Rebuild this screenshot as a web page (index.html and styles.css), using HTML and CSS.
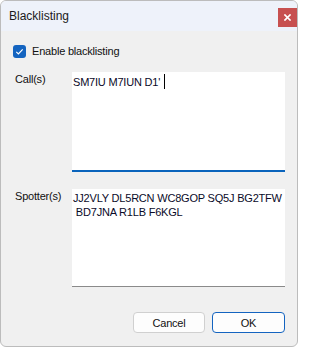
FILE: index.html
```html
<!DOCTYPE html>
<html>
<head>
<meta charset="utf-8">
<link rel="stylesheet" href="styles.css">
</head>
<body>
<div class="window">
  <div class="titlebar">
    <span class="title">Blacklisting</span>
    <span class="close">
      <svg width="7" height="7" viewBox="0 0 7 7"><path d="M1 1L6 6M6 1L1 6" stroke="#fff" stroke-width="1.7" stroke-linecap="square"/></svg>
    </span>
  </div>
  <div class="content">
    <label class="check-row">
      <span class="checkbox">
        <svg width="13" height="13" viewBox="0 0 13 13"><path d="M3.3 6.8L5.4 8.9L9.7 4.4" fill="none" stroke="#fff" stroke-width="1.2"/></svg>
      </span>
      <span class="check-label">Enable blacklisting</span>
    </label>
    <div class="form">
      <div class="label">Call(s)</div>
      <div class="box box-calls">SM7IU M7IUN D1'<span class="caret"></span></div>
      <div class="label">Spotter(s)</div>
      <div class="box box-spotters">JJ2VLY DL5RCN WC8GOP SQ5J BG2TFW
 BD7JNA R1LB F6KGL</div>
    </div>
    <div class="buttons">
      <button class="btn">Cancel</button>
      <button class="btn btn-default">OK</button>
    </div>
  </div>
</div>
</body>
</html>
```

FILE: styles.css
```css
html, body {
  margin: 0;
  padding: 0;
  background: #ffffff;
}
body {
  font-family: "Liberation Sans", Arial, sans-serif;
  color: #000;
}
.window {
  box-sizing: border-box;
  width: 298px;
  height: 347px;
  border: 1px solid #bcbcbc;
  border-radius: 6px;
  overflow: hidden;
  background: #f0f0f0;
  display: flex;
  flex-direction: column;
}
.titlebar {
  height: 30px;
  flex: none;
  background: #eef2fa;
  display: flex;
  align-items: flex-start;
  justify-content: space-between;
}
.title {
  font-size: 12px;
  line-height: 15px;
  margin-top: 8px;
  margin-left: 8px;
  color: #1a1a1a;
}
.close {
  width: 19px;
  height: 19px;
  margin-top: 7px;
  background: #c75050;
  display: flex;
  align-items: center;
  justify-content: center;
}
.close svg { display: block; }
.content {
  flex: 1;
  display: flex;
  flex-direction: column;
  padding: 13px 12px 0 14px;
  font-size: 11px;
  letter-spacing: -0.2px;
}
.check-row {
  display: flex;
  align-items: center;
  height: 15px;
  margin-left: -2px;
}
.checkbox {
  width: 13px;
  height: 13px;
  background: #1464c0;
  border-radius: 3px;
  display: block;
}
.checkbox svg { display: block; }
.check-label {
  margin-left: 6px;
  line-height: 15px;
  color: #111;
}
.form {
  margin-top: 13px;
  display: grid;
  grid-template-columns: 57px 213px;
  row-gap: 17px;
}
.label {
  line-height: 15px;
  padding-top: 0px;
  color: #111;
}
.box {
  box-sizing: border-box;
  background: #ffffff;
  padding: 2px 1px 0 1px;
  line-height: 14px;
  color: #0a0a28;
  white-space: pre;
}
.box-calls {
  height: 100px;
  border-bottom: 2px solid #0a64bc;
}
.box-spotters {
  height: 98px;
  border-bottom: 1px solid #8a8a8a;
}
.caret {
  display: inline-block;
  width: 1px;
  height: 15px;
  background: #000;
  vertical-align: -3px;
  margin-left: 4px;
}
.buttons {
  margin-top: 25px;
  display: flex;
  justify-content: flex-end;
  gap: 7px;
}
.btn {
  box-sizing: border-box;
  width: 72px;
  height: 21px;
  padding: 0;
  background: #fdfdfd;
  border: 1px solid #d0d0d0;
  border-radius: 4px;
  font-family: "Liberation Sans", Arial, sans-serif;
  font-size: 11px;
  letter-spacing: -0.2px;
  color: #111;
}
.btn-default {
  width: 73px;
  border-color: #1464c0;
}
```
